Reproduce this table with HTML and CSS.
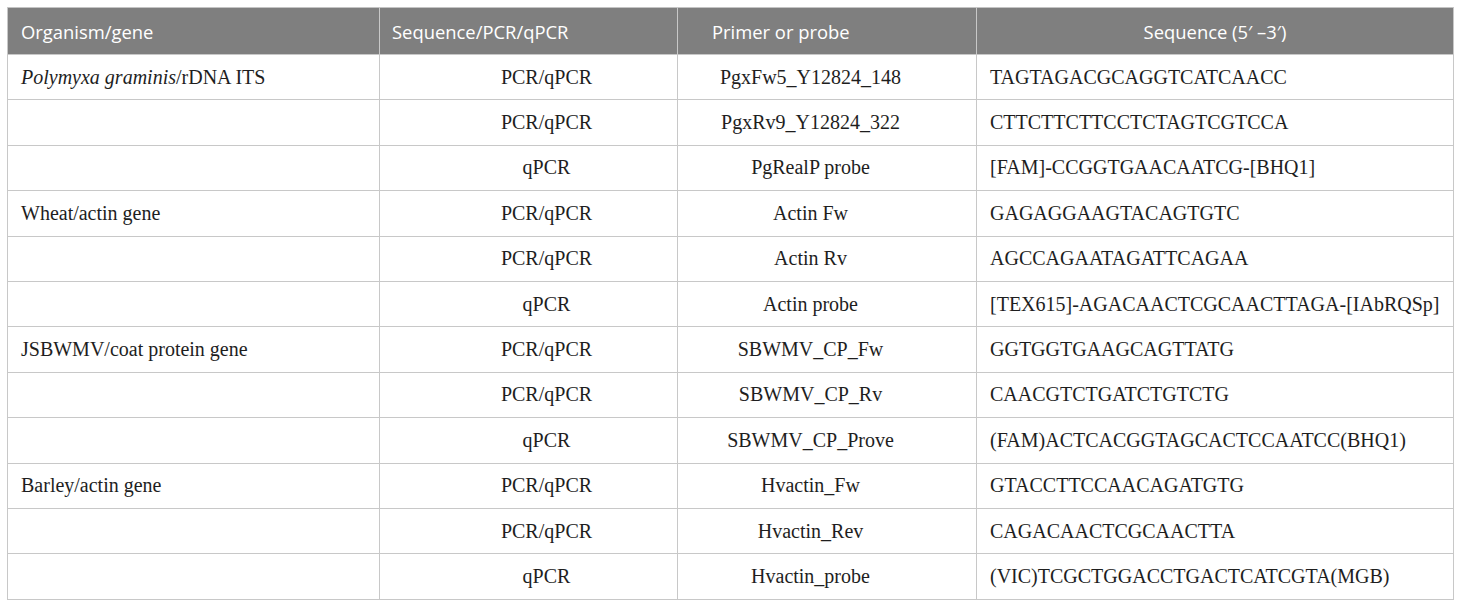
FILE: index.html
```html
<!DOCTYPE html>
<html>
<head>
<meta charset="utf-8">
<link rel="stylesheet" href="styles.css">
</head>
<body>
<table class="tbl">
  <colgroup>
    <col class="c1"><col class="c2"><col class="c3"><col class="c4">
  </colgroup>
  <thead>
    <tr>
      <th class="h1">Organism/gene</th>
      <th class="h2">Sequence/PCR/qPCR</th>
      <th class="h3">Primer or probe</th>
      <th class="h4">Sequence (5′ –3′)</th>
    </tr>
  </thead>
  <tbody>
    <tr><td class="org"><i>Polymyxa graminis</i>/rDNA ITS</td><td class="ty">PCR/qPCR</td><td class="pr">PgxFw5_Y12824_148</td><td class="sq">TAGTAGACGCAGGTCATCAACC</td></tr>
    <tr><td class="org"></td><td class="ty">PCR/qPCR</td><td class="pr">PgxRv9_Y12824_322</td><td class="sq">CTTCTTCTTCCTCTAGTCGTCCA</td></tr>
    <tr><td class="org"></td><td class="ty">qPCR</td><td class="pr">PgRealP probe</td><td class="sq">[FAM]-CCGGTGAACAATCG-[BHQ1]</td></tr>
    <tr><td class="org">Wheat/actin gene</td><td class="ty">PCR/qPCR</td><td class="pr">Actin Fw</td><td class="sq">GAGAGGAAGTACAGTGTC</td></tr>
    <tr><td class="org"></td><td class="ty">PCR/qPCR</td><td class="pr">Actin Rv</td><td class="sq">AGCCAGAATAGATTCAGAA</td></tr>
    <tr><td class="org"></td><td class="ty">qPCR</td><td class="pr">Actin probe</td><td class="sq">[TEX615]-AGACAACTCGCAACTTAGA-[IAbRQSp]</td></tr>
    <tr><td class="org">JSBWMV/coat protein gene</td><td class="ty">PCR/qPCR</td><td class="pr">SBWMV_CP_Fw</td><td class="sq">GGTGGTGAAGCAGTTATG</td></tr>
    <tr><td class="org"></td><td class="ty">PCR/qPCR</td><td class="pr">SBWMV_CP_Rv</td><td class="sq">CAACGTCTGATCTGTCTG</td></tr>
    <tr><td class="org"></td><td class="ty">qPCR</td><td class="pr">SBWMV_CP_Prove</td><td class="sq">(FAM)ACTCACGGTAGCACTCCAATCC(BHQ1)</td></tr>
    <tr><td class="org">Barley/actin gene</td><td class="ty">PCR/qPCR</td><td class="pr">Hvactin_Fw</td><td class="sq">GTACCTTCCAACAGATGTG</td></tr>
    <tr><td class="org"></td><td class="ty">PCR/qPCR</td><td class="pr">Hvactin_Rev</td><td class="sq">CAGACAACTCGCAACTTA</td></tr>
    <tr><td class="org"></td><td class="ty">qPCR</td><td class="pr">Hvactin_probe</td><td class="sq">(VIC)TCGCTGGACCTGACTCATCGTA(MGB)</td></tr>
  </tbody>
</table>
</body>
</html>
```
FILE: styles.css
```css
html, body {
  margin: 0;
  padding: 0;
  background: #ffffff;
}
body {
  padding: 7px 0 0 7px;
}
.tbl {
  border-collapse: collapse;
  table-layout: fixed;
  width: 1446px;
  font-family: "Liberation Serif", "Times New Roman", serif;
  font-size: 20px;
  color: #1e1e1e;
  border: 1px solid #c4c4c4;
}
.c1 { width: 372px; }
.c2 { width: 298px; }
.c3 { width: 299px; }
.c4 { width: 477px; }
.tbl th {
  background: #7f7f7f;
  color: #ffffff;
  font-family: "Open Sans", "Noto Sans", sans-serif;
  font-weight: normal;
  font-size: 18.4px;
  height: 46px;
  padding: 0 14px;
  text-align: left;
  border: 1px solid #c8c8c8;
  border-top: 0;
  vertical-align: middle;
}
.tbl th.h1 { padding-left: 13px; }
.tbl th.h2 { padding-left: 12px; }
.tbl th.h3 { padding-left: 34px; }
.tbl th.h4 { text-align: center; }
.tbl td {
  height: 44.4px;
  padding: 0 13px;
  border: 1px solid #c8c8c8;
  vertical-align: middle;
  white-space: nowrap;
}
.tbl td.ty {
  text-align: center;
  padding-left: 50px;
  padding-right: 14px;
}
.tbl td.pr {
  text-align: center;
  padding-left: 14px;
  padding-right: 47px;
}
.tbl td.sq {
  text-align: left;
}
```
